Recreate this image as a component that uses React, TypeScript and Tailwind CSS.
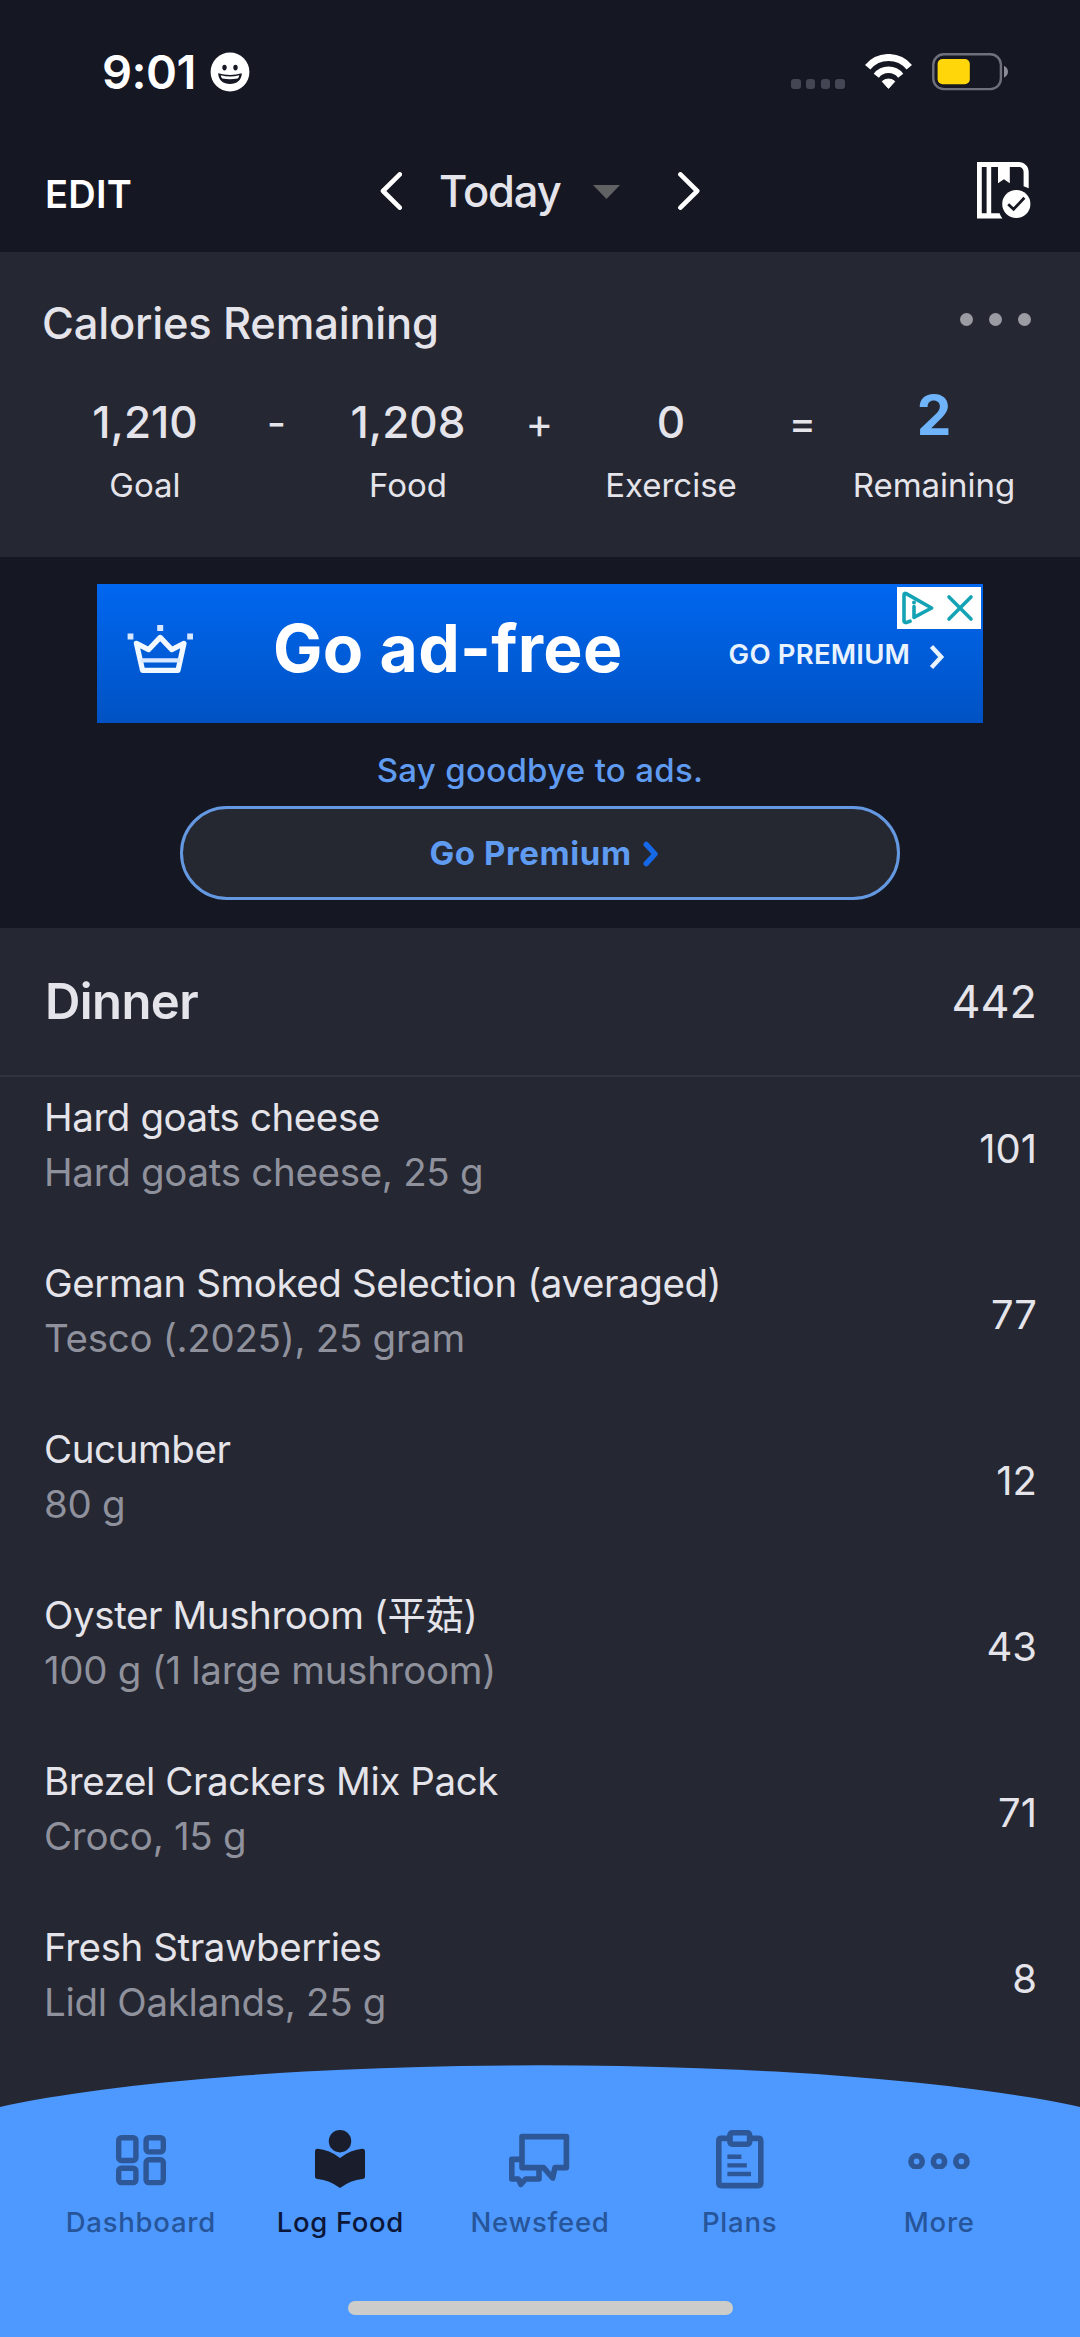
import type { ReactNode } from "react";

interface FoodItem {
  name: string;
  detail: string;
  calories: number;
}

const foods: FoodItem[] = [
  { name: "Hard goats cheese", detail: "Hard goats cheese, 25 g", calories: 101 },
  { name: "German Smoked Selection (averaged)", detail: "Tesco (.2025), 25 gram", calories: 77 },
  { name: "Cucumber", detail: "80 g", calories: 12 },
  { name: "Oyster Mushroom (平菇)", detail: "100 g (1 large mushroom)", calories: 43 },
  { name: "Brezel Crackers Mix Pack", detail: "Croco, 15 g", calories: 71 },
  { name: "Fresh Strawberries", detail: "Lidl Oaklands, 25 g", calories: 8 },
];

function StatusBar() {
  return (
    <div className="flex h-[144px] shrink-0 items-center pl-[102px] pr-[72px]">
      <span className="pb-[2px] text-[47px] leading-none font-semibold tracking-[-0.5px] text-white">9:01</span>
      <svg className="ml-[14px]" width="40" height="40" viewBox="-20 -20 40 40">
        <circle r="19.4" fill="#fff" />
        <ellipse cx="-5.5" cy="-4.4" rx="2.2" ry="2.8" fill="#151723" />
        <ellipse cx="5.5" cy="-4.4" rx="2.2" ry="2.8" fill="#151723" />
        <path d="M-11.8 1.2Q0 4.6 11.8 1.2C11.8 8 6.5 12 0 12S-11.8 8-11.8 1.2Z" fill="#151723" />
        <path d="M-9.3 3.2Q0 5.6 9.3 3.2Q9 5.6 7.6 6.4Q0 8 -7.6 6.4Q-9 5.6-9.3 3.2Z" fill="#fff" />
      </svg>

      <div className="ml-auto mt-[24px] flex gap-[5.2px]">
        <i className="size-[9.6px] rounded-[3px] bg-[#454653]" />
        <i className="size-[9.6px] rounded-[3px] bg-[#454653]" />
        <i className="size-[9.6px] rounded-[3px] bg-[#454653]" />
        <i className="size-[9.6px] rounded-[3px] bg-[#454653]" />
      </div>

      <svg className="ml-[20px]" width="47" height="36" viewBox="0 0 47 36" fill="none">
        <path d="M2.7 13.2A27.1 27.1 0 0 1 44.3 13.2" stroke="#fff" strokeWidth="7" />
        <path d="M11.3 21.7A15.6 15.6 0 0 1 35.7 21.7" stroke="#fff" strokeWidth="6.6" />
        <path d="M17.2 27.4A9.6 9.6 0 0 1 29.8 27.4L23.5 34.4Z" fill="#fff" stroke="#fff" strokeWidth="1" strokeLinejoin="round" />
      </svg>

      <svg className="ml-[20px]" width="76" height="38" viewBox="0 0 76 38">
        <rect x="1.3" y="1.3" width="67.6" height="34.8" rx="10.5" fill="none" stroke="#6e707c" strokeWidth="2.4" />
        <rect x="5.6" y="6" width="32.2" height="25.2" rx="5" fill="#ffd60a" />
        <path d="M72 12.8Q76 15 76 18.7T72 24.6Z" fill="#8b8c95" />
      </svg>
    </div>
  );
}

function NavBar() {
  return (
    <div className="grid h-[108px] shrink-0 grid-cols-[1fr_320px_1fr] items-center pb-[14px]">
      <span className="pl-[45px] pt-[6px] text-[38px] leading-none font-semibold tracking-[0.3px] text-white">
        EDIT
      </span>

      <div className="flex items-center">
        <svg width="22" height="38" viewBox="0 0 22 38" fill="none">
          <path d="M19.8 2.4L3 19L19.8 35.6" stroke="#fff" strokeWidth="4.6" strokeLinecap="round" strokeLinejoin="round" />
        </svg>
        <span className="ml-[37px] w-[122px] whitespace-nowrap text-[43.5px] leading-[52px] font-[450] tracking-[-1.1px] text-[#e4e4ea]">
          Today
        </span>
        <svg className="ml-[32px] mt-[2px]" width="27" height="14" viewBox="0 0 27 14">
          <path d="M0 0H27L13.5 14Z" fill="#5f6163" />
        </svg>
        <svg className="ml-auto" width="22" height="38" viewBox="0 0 22 38" fill="none">
          <path d="M2.4 2.4L19.2 19L2.4 35.6" stroke="#fff" strokeWidth="4.6" strokeLinecap="round" strokeLinejoin="round" />
        </svg>
      </div>

      <svg className="-mt-[2px] ml-auto mr-[49px]" width="54" height="57" viewBox="0 0 54 57" fill="none">
        <path d="M25.4 56.4H0V0H41.6C47.4 0 51.7 4.4 51.7 10V26.2L46.6 24.2V10.4C46.6 7 44.8 5 41.4 5H32.8V21.2L26.9 17.2L21 21.2V5H14.2V51.2H22.6Q23.6 54.2 25.4 56.4ZM4.8 5V51.2H9.6V5Z" fill="#fff" fillRule="evenodd" />
        <circle cx="39.3" cy="42" r="14.1" fill="#fff" />
        <path d="M31.2 42.2L36.6 47.2L47.4 35.8" stroke="#151723" strokeWidth="2.8" />
      </svg>
    </div>
  );
}

function Metric({ value, label, highlight }: { value: string; label: string; highlight?: boolean }) {
  return (
    <div className="w-[174px] text-center">
      <div className="h-[56px]">
        {highlight ? (
          <span className="block text-[55px] leading-[42px] font-bold text-[#6fb4fb]">{value}</span>
        ) : (
          <span className="block text-[44px] leading-[56px] font-[450] text-[#e4e4ea]">{value}</span>
        )}
      </div>
      <div className="mt-[15px] text-[33px] leading-[40px] text-[#e4e4ea]">{label}</div>
    </div>
  );
}

function Operator({ children }: { children: ReactNode }) {
  return <div className="w-[89px] text-center text-[42px] leading-[58px] text-[#e4e4ea]">{children}</div>;
}

function CaloriesSummary() {
  return (
    <section className="h-[305px] shrink-0 bg-[#252732] pt-[47px]">
      <div className="flex justify-between pl-[42px] pr-[49px]">
        <h2 className="text-[43.5px] leading-[48px] font-[450] tracking-[-0.2px] text-[#e4e4ea]">
          Calories Remaining
        </h2>
        <div className="flex gap-[16px] pt-[14px]">
          <i className="size-[13px] rounded-full bg-[#9a9ba3]" />
          <i className="size-[13px] rounded-full bg-[#9a9ba3]" />
          <i className="size-[13px] rounded-full bg-[#9a9ba3]" />
        </div>
      </div>

      <div className="mt-[47px] flex pl-[58px]">
        <Metric value="1,210" label="Goal" />
        <Operator>-</Operator>
        <Metric value="1,208" label="Food" />
        <Operator>+</Operator>
        <Metric value="0" label="Exercise" />
        <Operator>=</Operator>
        <Metric value="2" label="Remaining" highlight />
      </div>
    </section>
  );
}

function AdSection() {
  return (
    <section className="flex h-[371px] shrink-0 flex-col items-center pt-[27px]">
      <div className="relative flex h-[139px] w-[886px] items-center bg-gradient-to-b from-[#0067f0] to-[#0052c3] pb-[11px] text-white">
        <svg className="ml-[30px] mt-[2px]" width="67" height="49" viewBox="0 0 67 49" fill="none">
          <path d="M9.4 18.4L21.6 24.6L33.2 12.4L44.8 24.6L57 18.4L51 45.4H15.6Z" stroke="#f2f8ff" strokeWidth="5.2" strokeLinejoin="round" />
          <path d="M13.5 35.4H53" stroke="#d8e8ff" strokeWidth="4.4" />
          <path d="M.6 8.6h5.8v5.8H.6zM30.2 0h6v6h-6zM60.2 8.6H66v5.8h-5.8z" fill="#d6e7ff" />
        </svg>
        <span className="ml-[79px] text-[66px] leading-none font-bold tracking-[0.3px]">Go ad-free</span>
        <span className="ml-[106px] mt-[13px] text-[27.5px] leading-none font-semibold tracking-[0.2px] text-[#e9f2ff]">
          GO PREMIUM
        </span>
        <svg className="ml-[19px] mt-[18px]" width="16" height="26" viewBox="0 0 16 26" fill="none">
          <path d="M2.5 2.5L12.2 13L2.5 23.5" stroke="#e9f2ff" strokeWidth="4.4" />
        </svg>

        {/* AdChoices badge */}
        <div className="absolute right-[2.5px] top-[2.5px] flex h-[42px] w-[84px] items-center bg-white pl-[5px]">
          <svg width="32" height="34" viewBox="0 0 32 34" fill="none" stroke="#14a3b5" strokeLinecap="round" strokeLinejoin="round">
            <path d="M8 30.2L4 31.6Q2 31.6 2 29.6V4Q2 1.6 4.2 2.6L29.6 17L12 26.4V15.6" strokeWidth="3.6" />
            <circle cx="12" cy="11.4" r="1" strokeWidth="2" />
          </svg>
          <svg className="ml-[12px]" width="28" height="28" viewBox="0 0 28 28">
            <path d="M3 3L25 25M25 3L3 25" stroke="#14a3b5" strokeWidth="3.6" strokeLinecap="round" />
          </svg>
        </div>
      </div>

      <p className="mt-[27px] text-[33px] leading-[40px] font-[450] tracking-[0.3px] text-[#5f9bf0]">Say goodbye to ads.</p>

      <button className="mt-[16px] flex h-[94px] w-[720px] items-center justify-center rounded-full border-[3px] border-[#6499e2] bg-[#252731] pl-[8px] text-[33px] leading-none font-bold tracking-[0.6px] text-[#5f9bf0]">
        Go Premium
        <svg className="ml-[11px] mt-[2px]" width="16" height="26" viewBox="0 0 16 26" fill="none">
          <path d="M3.2 3.4L12 13L3.2 22.6" stroke="#1568e8" strokeWidth="5.4" strokeLinecap="round" strokeLinejoin="round" />
        </svg>
      </button>
    </section>
  );
}

function MealList() {
  return (
    <section className="min-h-0 flex-1 overflow-hidden bg-[#252732] text-[#e4e4ea]">
      <div className="flex h-[149px] items-center justify-between border-b-2 border-[#30323d] pl-[45px] pr-[43px]">
        <h2 className="text-[49px] leading-none font-semibold tracking-[-0.6px]">Dinner</h2>
        <span className="text-[45px] leading-none">442</span>
      </div>
      {foods.map((food) => (
        <div key={food.name} className="flex h-[166px] justify-between pl-[44px] pr-[43px] pt-[12px]">
          <div className="whitespace-nowrap text-[38.5px] leading-[56px]">
            <div className="h-[55px] tracking-[-0.42px]">{food.name}</div>
            <div className="h-[56px] tracking-[-0.3px] text-[#8f919c]">{food.detail}</div>
          </div>
          <span className="pt-[32px] text-[40px] leading-[56px]">{food.calories}</span>
        </div>
      ))}
    </section>
  );
}

function Tab({ label, active, children }: { label: string; active?: boolean; children: ReactNode }) {
  return (
    <div className="flex flex-col items-center">
      <div className="flex h-[60px] items-start">{children}</div>
      <span
        className={
          active
            ? "mt-[16px] text-[27.5px] leading-[32px] font-medium tracking-[0.65px] text-[#0b1638]"
            : "mt-[16px] text-[27.5px] leading-[32px] font-[450] tracking-[0.75px] text-[#27559a]"
        }
      >
        {label}
      </span>
    </div>
  );
}

function TabBar() {
  return (
    <nav className="relative h-[272px] shrink-0 bg-[#252732]">
      <svg className="absolute inset-0" width="1080" height="272" viewBox="0 0 1080 272">
        <path d="M0 42A640 90 0 0 1 1080 42V272H0Z" fill="#4e99ff" />
      </svg>

      <div className="relative grid grid-cols-5 px-[41px] pt-[65px]">
        <Tab label="Dashboard">
          <svg className="mt-[5px]" width="50" height="51" viewBox="0 0 50 51" fill="none" stroke="#2d5796" strokeWidth="5.4">
            <rect x="2.7" y="2.7" width="17.2" height="22.8" rx="2.8" />
            <rect x="30.1" y="2.7" width="17.2" height="14.2" rx="2.8" />
            <rect x="2.7" y="33.2" width="17.2" height="14.4" rx="2.8" />
            <rect x="30.1" y="24.8" width="17.2" height="22.8" rx="2.8" />
          </svg>
        </Tab>
        <Tab label="Log Food" active>
          <svg width="50" height="60" viewBox="0 0 50 60" fill="#1a1d2c">
            <circle cx="25" cy="11.2" r="11.2" />
            <path d="M2.6 18.8Q14.4 19.6 25 28Q35.6 19.6 47.4 18.8Q50 18.8 50 21V46.6Q50 49 47.4 49Q35.6 50 25 58Q14.4 50 2.6 49Q0 49 0 46.6V21Q0 18.8 2.6 18.8Z" />
          </svg>
        </Tab>
        <Tab label="Newsfeed">
          <svg className="mt-[3px]" width="62" height="57" viewBox="0 0 62 57" fill="none" stroke="#2d5796" strokeWidth="5.6" strokeLinejoin="round">
            <path d="M13 3.6H57.4V34.6H46L43.6 45L34.6 34.6H13Z" />
            <path d="M13 26.4H2.8V46H9.4L11.8 51.4L16.6 46H30V36" />
          </svg>
        </Tab>
        <Tab label="Plans">
          <svg width="48" height="59" viewBox="0 0 48 59" fill="none" stroke="#2d5796" strokeWidth="5.6">
            <path d="M12.4 8.4H5.4Q2.8 8.4 2.8 11V53Q2.8 55.6 5.4 55.6H42.2Q44.8 55.6 44.8 53V11Q44.8 8.4 42.2 8.4H35.2" />
            <rect x="14" y="2.8" width="19.6" height="11.4" rx="2" />
            <path d="M11.4 26.8H25.4M11.4 35.4H30.8M11.4 44H35" strokeWidth="4.4" />
          </svg>
        </Tab>
        <Tab label="More">
          <svg className="mt-[23px]" width="62" height="15.5" viewBox="0 0 62 15.5" fill="none" stroke="#2d5796" strokeWidth="5.6">
            <circle cx="8.6" cy="8.4" r="5.6" />
            <circle cx="31" cy="8.4" r="5.6" />
            <circle cx="53.4" cy="8.4" r="5.6" />
          </svg>
        </Tab>
      </div>

      <div className="relative mx-auto mt-[63px] h-[14px] w-[385px] rounded-full bg-[#cccdca]" />
    </nav>
  );
}

export default function App() {
  return (
    <div className="flex h-[2337px] w-[1080px] flex-col overflow-hidden bg-[#151723] font-['Inter','Noto_Sans_CJK_SC',sans-serif]">
      <StatusBar />
      <NavBar />
      <CaloriesSummary />
      <AdSection />
      <MealList />
      <TabBar />
    </div>
  );
}
